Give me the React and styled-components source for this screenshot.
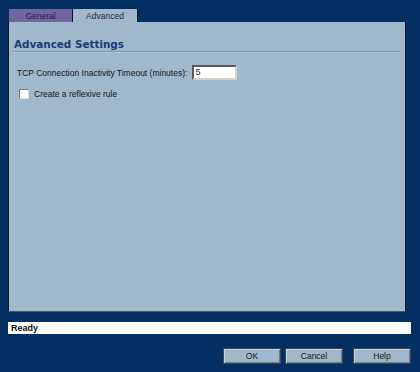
import React from "react"
import styled, { createGlobalStyle } from "styled-components"

const GlobalStyle = createGlobalStyle`
  html, body {
    margin: 0;
    padding: 0;
    background: #032f62;
  }
`

const Window = styled.div`
  width: 420px;
  height: 372px;
  box-sizing: border-box;
  padding: 9px 9px 0 8px;
  background: #032f62;
  font-family: "Liberation Sans", Arial, sans-serif;
  display: flex;
  flex-direction: column;
`

const TabRow = styled.div`
  display: flex;
  height: 13px;
  padding-left: 1px;
`

const Tab = styled.div`
  width: ${({ w }) => w}px;
  box-sizing: border-box;
  height: 13px;
  display: flex;
  align-items: center;
  justify-content: center;
  font-size: 8.5px;
  color: ${({ active }) => (active ? "#2b2b3a" : "#1e1e3a")};
  background: ${({ active }) => (active ? "#9fb8cc" : "#6f65a1")};
  border-right: 1px solid #101018;
  padding-top: 1px;
`

const Panel = styled.div`
  width: 398px;
  height: 290px;
  box-sizing: border-box;
  background: #9fb8cc;
  border-left: 1px solid #0c1420;
  border-right: 1px solid #0c1420;
  border-bottom: 1px solid #46586a;
  padding: 15px 5px 0 4px;
  display: flex;
  flex-direction: column;
`

const Heading = styled.h2`
  margin: 0;
  font-family: "DejaVu Sans", Verdana, sans-serif;
  font-weight: bold;
  font-size: 10.4px;
  line-height: 14px;
  color: #1b3b79;
  padding-left: 1px;
  border-bottom: 1px solid #7598ac;
  box-shadow: 0 1px 0 #b4cad9;
`

const FieldRow = styled.div`
  display: flex;
  align-items: center;
  gap: 5px;
  margin-top: 13px;
  padding-left: 4px;
  font-size: 8.5px;
  color: #151515;
`

const TextInput = styled.div`
  width: 45px;
  height: 15px;
  box-sizing: border-box;
  background: #fff;
  border-top: 2px solid #5a5a5a;
  border-left: 2px solid #5a5a5a;
  border-bottom: 2px solid #d6d2ca;
  border-right: 2px solid #d6d2ca;
  font-size: 9px;
  line-height: 11px;
  padding-left: 1px;
  color: #1a2a6a;
`

const CheckRow = styled.div`
  display: flex;
  align-items: center;
  gap: 5px;
  margin-top: 9px;
  padding-left: 6px;
  font-size: 8.5px;
  color: #151515;
`

const Box = styled.span`
  width: 10px;
  height: 10px;
  box-sizing: border-box;
  background: #fff;
  border: 1px solid #7a7a7a;
  border-right-color: #dcdcdc;
  border-bottom-color: #dcdcdc;
`

const StatusBar = styled.div`
  width: 403px;
  height: 12px;
  margin-top: 10px;
  background: #fff;
  font-size: 9px;
  font-weight: bold;
  line-height: 12px;
  padding-left: 3px;
  box-sizing: border-box;
  color: #111;
`

const ButtonRow = styled.div`
  display: flex;
  justify-content: flex-end;
  width: 403px;
  margin-top: 14px;
  gap: 4px;
`

const Button = styled.div`
  width: 58px;
  height: 16px;
  box-sizing: border-box;
  margin-left: ${({ gapLeft }) => gapLeft || 0}px;
  background: #9fb8cc;
  border: 1px solid #3e4a56;
  box-shadow: inset 1px 1px 0 #c4d4e0, inset -1px -1px 0 #67798a;
  display: flex;
  align-items: center;
  justify-content: center;
  font-size: 8.5px;
  color: #151515;
`

export default function App() {
  return (
    <>
      <GlobalStyle />
      <Window>
        <TabRow>
          <Tab w={64}>General</Tab>
          <Tab w={65} active>Advanced</Tab>
        </TabRow>
        <Panel>
          <Heading>Advanced Settings</Heading>
          <FieldRow>
            <span>TCP Connection Inactivity Timeout (minutes):</span>
            <TextInput>5</TextInput>
          </FieldRow>
          <CheckRow>
            <Box />
            <span>Create a reflexive rule</span>
          </CheckRow>
        </Panel>
        <StatusBar>Ready</StatusBar>
        <ButtonRow>
          <Button>OK</Button>
          <Button>Cancel</Button>
          <Button gapLeft={6}>Help</Button>
        </ButtonRow>
      </Window>
    </>
  )
}
